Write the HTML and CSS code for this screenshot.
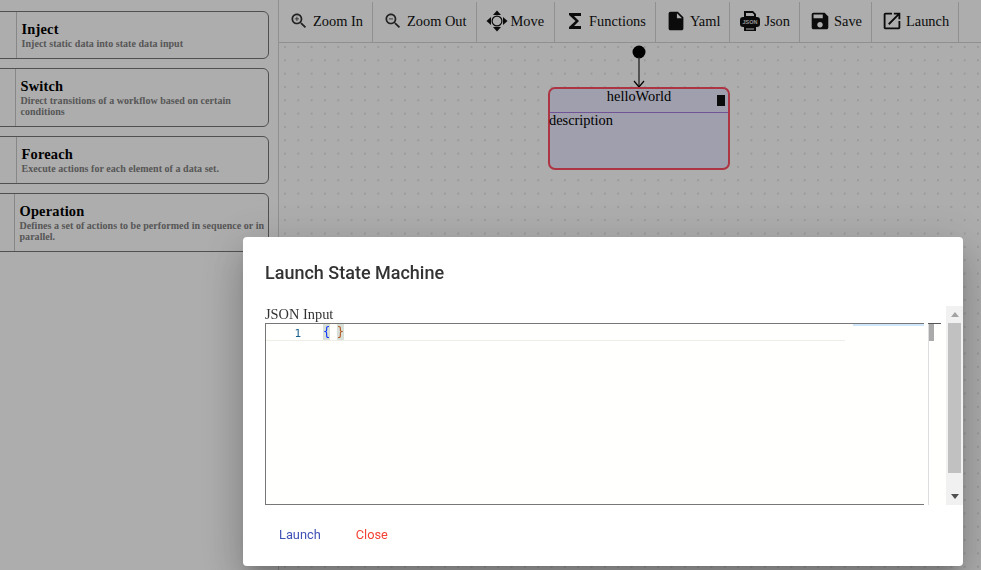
FILE: index.html
```html
<!DOCTYPE html>
<html lang="en">
<head>
<meta charset="utf-8">
<title>State Machine Editor</title>
<link rel="stylesheet" href="styles.css">
</head>
<body>
<div class="app">
  <aside class="sidebar">
    <div class="card card-inject"><div class="card-icon"></div><div class="card-body"><div class="card-title">Inject</div><div class="card-desc">Inject static data into state data input</div></div></div>
    <div class="card card-switch"><div class="card-icon"></div><div class="card-body"><div class="card-title">Switch</div><div class="card-desc">Direct transitions of a workflow based on certain conditions</div></div></div>
    <div class="card card-foreach"><div class="card-icon"></div><div class="card-body"><div class="card-title">Foreach</div><div class="card-desc">Execute actions for each element of a data set.</div></div></div>
    <div class="card card-operation"><div class="card-icon"></div><div class="card-body"><div class="card-title">Operation</div><div class="card-desc">Defines a set of actions to be performed in sequence or in parallel.</div></div></div>
  </aside>
  <main class="main">
    <nav class="toolbar">
      <div class="tool"><svg class="icon icon-zoom" viewBox="-2.400 -2.400 28.800 28.800"><path d="M15.500 14h-.79l-.28-.27C15.410 12.590 16 11.110 16 9.500 16 5.910 13.090 3 9.500 3S3 5.910 3 9.500 5.910 16 9.500 16c1.610 0 3.090-.59 4.230-1.570l.27.28v.79l5 4.990L20.490 19l-4.990-5zm-6 0C7.010 14 5 11.990 5 9.500S7.010 5 9.500 5 14 7.010 14 9.500 11.990 14 9.500 14z"/><path d="M12 10h-2v2H9v-2H7V9h2V7h1v2h2v1z"/></svg><span>Zoom In</span></div>
      <div class="tool"><svg class="icon icon-zoom" viewBox="-2.400 -2.400 28.800 28.800"><path d="M15.500 14h-.79l-.28-.27C15.410 12.590 16 11.110 16 9.500 16 5.910 13.090 3 9.500 3S3 5.910 3 9.500 5.910 16 9.500 16c1.610 0 3.090-.59 4.230-1.570l.27.28v.79l5 4.990L20.490 19l-4.990-5zm-6 0C7.010 14 5 11.990 5 9.500S7.010 5 9.500 5 14 7.010 14 9.500 11.990 14 9.500 14z"/><path d="M7 9h5v1H7z"/></svg><span>Zoom Out</span></div>
      <div class="tool tool-move"><svg class="icon" viewBox="0 0 24 24"><path d="M12 1.500l4 4.500h-8zM12 22.500l-4-4.500h8zM1.500 12L6 8v8zM22.500 12L18 16V8z"/><path d="M12 6.500a5.500 5.500 0 1 0 0 11 5.500 5.500 0 0 0 0-11zm0 1.200a4.300 4.300 0 1 1 0 8.600 4.300 4.300 0 0 1 0-8.600z"/></svg><span>Move</span></div>
      <div class="tool"><svg class="icon" viewBox="0 0 24 24"><path d="M18 4H6v2l6.500 6L6 18v2h12v-3h-7l5-5-5-5h7z"/></svg><span>Functions</span></div>
      <div class="tool"><svg class="icon" viewBox="-1 -1 26 26"><path d="M6 2c-1.100 0-1.990.9-1.990 2L4 20c0 1.100.89 2 1.990 2H18c1.100 0 2-.9 2-2V8l-6-6H6zm7 7V3.500L18.500 9H13z"/></svg><span>Yaml</span></div>
      <div class="tool"><svg class="icon" viewBox="0 0 24 24"><path d="M6 2h9l3 3v3H6zM8 4v3h8V5.500L14.500 4zM6 18h12v4H6zm2 1.500V20.500h8v-1z"/><rect x="2" y="8" width="20" height="10" rx="3"/><text class="json-label" x="12" y="15.200" text-anchor="middle">JSON</text></svg><span>Json</span></div>
      <div class="tool"><svg class="icon" viewBox="-1 -1 26 26"><path d="M17 3H5c-1.110 0-2 .9-2 2v14c0 1.100.89 2 2 2h14c1.100 0 2-.9 2-2V7l-4-4zm-5 16c-1.660 0-3-1.340-3-3s1.340-3 3-3 3 1.340 3 3-1.340 3-3 3zm3-10H5V5h10v4z"/></svg><span>Save</span></div>
      <div class="tool"><svg class="icon" viewBox="-1 -1 26 26"><path d="M19 19H5V5h7V3H5c-1.110 0-2 .9-2 2v14c0 1.100.89 2 2 2h14c1.100 0 2-.9 2-2v-7h-2v7zM14 3v2h3.590l-9.830 9.830 1.410 1.410L19 6.410V10h2V3h-7z"/></svg><span>Launch</span></div>
    </nav>
    <section class="canvas">
      <svg class="start" viewBox="0 0 20 46" width="20" height="46"><circle cx="10" cy="7" r="6.500"/><path class="edge" d="M10 12V42"/><path class="edge-head" d="M5 36l5 6 5-6"/></svg>
      <div class="node">
        <div class="node-head"><span>helloWorld</span><i class="node-trash"></i></div>
        <div class="node-desc">description</div>
      </div>
    </section>
  </main>
</div>
<div class="overlay"></div>
<div class="dialog">
  <h2 class="dialog-title">Launch State Machine</h2>
  <div class="dialog-content">
    <div class="scroll-body">
      <label class="json-title">JSON Input</label>
      <div class="editor">
        <div class="editor-line"><span class="line-no">1</span><span class="code"><b class="brace brace-open">{</b> <b class="brace brace-close">}</b></span></div>
        <div class="minimap-line"></div>
        <div class="minimap-thumb"></div>
        <div class="ruler"></div>
      </div>
    </div>
    <div class="scrollbar">
      <div class="arrow arrow-up"></div>
      <div class="track"><div class="thumb"></div></div>
      <div class="arrow arrow-down"></div>
    </div>
  </div>
  <div class="dialog-actions">
    <button class="btn btn-primary">Launch</button>
    <button class="btn btn-warn">Close</button>
  </div>
</div>
</body>
</html>
```
FILE: styles.css
```css
* { box-sizing: border-box; }
html, body { margin: 0; height: 100%; overflow: hidden; }
body { font-family: "Liberation Serif", serif; font-size: 14.4px; color: #000; background: #fff; }

.app { display: flex; width: 981px; height: 570px; }

.sidebar {
  width: 279px; flex: none; padding: 11px 9px 0 0;
  display: flex; flex-direction: column; gap: 9px;
  border-right: 1px solid #d5d5d5; background: #fff;
}
.card {
  display: flex; margin-left: -8px;
  border: 1px solid #777; border-radius: 6px; background: #fff;
}
.card-icon { border-right: 1px solid #c8c8c8; }
.card-inject .card-icon, .card-foreach .card-icon { width: 24px; }
.card-switch .card-icon { width: 23px; }
.card-operation .card-icon { width: 22px; }
.card-body { flex: 1; padding: 9px 2px 9px 4.500px; }
.card-title { font-size: 14.400px; font-weight: 700; line-height: 17px; color: #000; letter-spacing: 0.2px; }
.card-desc { font-size: 10px; font-weight: 700; line-height: 11px; color: #808080; letter-spacing: 0.04px; }

.main { flex: 1; min-width: 0; display: flex; flex-direction: column; }
.toolbar { height: 43px; flex: none; display: flex; padding-top: 2px; border-bottom: 1px solid #d5d5d5; background: #fff; }
.tool {
  display: flex; align-items: center; gap: 2px;
  padding: 0 9px 2px 8px; border-right: 1px solid #d5d5d5;
  color: #111; white-space: nowrap;
}
.tool-move { padding-right: 10px; }
.icon { width: 24px; height: 24px; flex: none; fill: #111; }
.icon-zoom { fill: #333; }
.json-label { font-family: "Liberation Sans", sans-serif; font-size: 5.500px; font-weight: 700; fill: #ddd; }

.canvas {
  position: relative; flex: 1;
  background-color: #fff;
  background-image: radial-gradient(circle at 1px 1px, #e4e4e4 0.8px, transparent 1px);
  background-size: 13.330px 13.330px;
  background-position: 5px 3px;
}
.start { position: absolute; left: 350px; top: 2px; }
.start circle { fill: #000; }
.edge { stroke: #333; stroke-width: 1.300px; fill: none; }
.edge-head { stroke: #000; stroke-width: 1.200px; fill: none; }
.node {
  position: absolute; left: 269px; top: 44px; width: 182px; height: 83px;
  border: 2px solid #ff4d63; border-radius: 7px; background: #ebebff;
  color: #000;
}
.node-head {
  position: relative; height: 24px; text-align: center; line-height: 14px;
  border-bottom: 1px solid #a77de0;
}
.node-trash { position: absolute; right: 3px; top: 6px; width: 8px; height: 11px; background: #111; }
.node-desc { line-height: 14px; margin-left: -1px; }

.overlay { position: fixed; inset: 0; background: rgba(0, 0, 0, 0.32); }

.dialog {
  position: fixed; left: 243px; top: 237px; width: 720px; height: 329px;
  display: flex; flex-direction: column;
  background: #fff; border-radius: 4px;
  box-shadow: 0 11px 15px -7px rgba(0,0,0,.2), 0 24px 38px 3px rgba(0,0,0,.14), 0 9px 46px 8px rgba(0,0,0,.12);
}
.dialog-title {
  margin: 0; padding: 25px 22px 0; height: 69px;
  font-family: Roboto, sans-serif; font-size: 18px; font-weight: 500; line-height: 22px; color: #333;
}
.dialog-content { display: flex; height: 199px; padding-left: 22px; }
.scroll-body { width: 681px; flex: none; }
.json-title { display: block; height: 17px; line-height: 17px; color: #333; }
.editor {
  position: relative; height: 182px; background: #fffffd; overflow: hidden;
  border-left: 1px solid #777;
}
.editor::before { content: ""; position: absolute; left: 0; top: 0; width: 658px; border-top: 1px solid #777; }
.editor::after { content: ""; position: absolute; left: 0; bottom: 0; width: 658px; border-bottom: 1px solid #777; }
.editor-line {
  display: flex; height: 17px; margin-top: 1px; width: 579px;
  border-bottom: 1px solid #eeeee8;
  font-family: "DejaVu Sans Mono", monospace; font-size: 11px; line-height: 17px;
}
.line-no { width: 35px; padding-top: 1px; text-align: right; color: #1a5f8a; }
.code { margin-left: 22px; white-space: pre; }
.brace { font-weight: 400; font-size: 12px; background: #d8e0d8; display: inline-block; width: 7px; height: 16px; line-height: 17px; vertical-align: top; overflow: hidden; }
.brace-open { color: #0431fa; }
.brace-close { color: #b3541e; }
.minimap-line { position: absolute; left: 587px; top: 1px; width: 71px; height: 2px; background: #cfe6fb; }
.minimap-thumb { position: absolute; left: 662px; top: 1px; width: 6px; height: 17px; background: #aaa; }
.ruler { position: absolute; left: 662px; top: 1px; bottom: 0; width: 1px; background: #ddd; }
.ruler::before { content: ""; position: absolute; left: 0; top: -1px; width: 13px; border-top: 1px solid #555; }

.scrollbar { width: 17px; flex: none; display: flex; flex-direction: column; background: #f1f1f1; }
.arrow { height: 17px; flex: none; display: flex; align-items: center; justify-content: center; }
.arrow::before { content: ""; border-left: 4px solid transparent; border-right: 4px solid transparent; }
.arrow-up::before { border-bottom: 5px solid #a3a3a3; }
.arrow-down::before { border-top: 5px solid #505050; }
.track { flex: 1; padding: 0 2px; }
.thumb { height: 150px; background: #c1c1c1; }

.dialog-actions { display: flex; gap: 3px; padding: 11px 0 0 20px; }
.btn {
  height: 36px; padding: 0 16px; border: 0; background: none; cursor: pointer;
  font-family: Roboto, sans-serif; font-size: 12.800px; font-weight: 400;
  min-width: 0;
}
.btn-primary { color: #3f51b5; }
.btn-warn { color: #f44336; }
```
